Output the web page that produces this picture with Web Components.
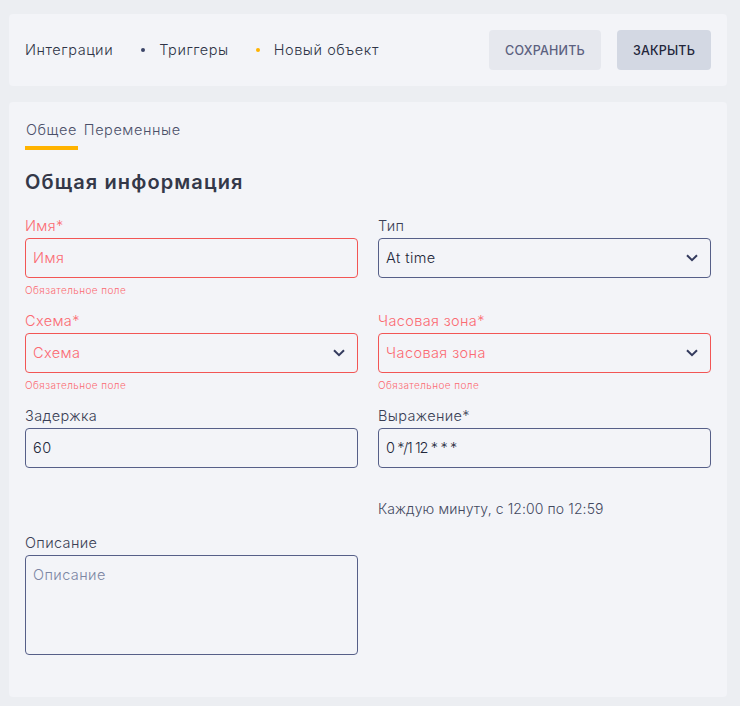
<!DOCTYPE html>
<html lang="ru">
<head>
<meta charset="utf-8">
<title>Новый объект</title>
<style>
    html, body {
        margin: 0;
        height: 706px;
        overflow: hidden;
        background: #eceef2;
        font-family: "Inter", "Noto Sans", sans-serif;
        color: #2f3447;
    }
    body {
        padding: 14px 13px 0 9px;
        box-sizing: border-box;
    }
</style>
</head>
<body>
<x-header>
    <x-crumb>Интеграции</x-crumb>
    <x-crumb dot="#3b4468" gap="28">Триггеры</x-crumb>
    <x-crumb dot="#ffb300" gap="27">Новый объект</x-crumb>
    <x-button slot="actions" kind="save">СОХРАНИТЬ</x-button>
    <x-button slot="actions" kind="close">ЗАКРЫТЬ</x-button>
</x-header>
<x-form-card>
    <x-tab slot="tabs" active>Общее</x-tab>
    <x-tab slot="tabs">Переменные</x-tab>
    <x-field label="Имя*" placeholder="Имя" error="Обязательное поле"></x-field>
    <x-field label="Тип" value="At time" select></x-field>
    <x-field label="Схема*" placeholder="Схема" error="Обязательное поле" select></x-field>
    <x-field label="Часовая зона*" placeholder="Часовая зона" error="Обязательное поле" select></x-field>
    <x-field label="Задержка" value="60"></x-field>
    <x-field label="Выражение*" value="0 */1 12 * * *" hint="Каждую минуту, с 12:00 по 12:59" tight></x-field>
    <x-field label="Описание" placeholder="Описание" multiline></x-field>
</x-form-card>
<script>
"use strict";
class Header extends HTMLElement {
    constructor() {
        super();
        this.attachShadow({ mode: "open" });
        this.shadowRoot.innerHTML = `
            <style>
                :host {
                    display: flex;
                    align-items: center;
                    justify-content: space-between;
                    height: 72px;
                    padding: 0 16px;
                    box-sizing: border-box;
                    background: #f3f4f8;
                    border-radius: 4px;
                }
                #crumbs, #actions { display: flex; align-items: center; }
                #crumbs { padding-bottom: 1px; }
                #actions { gap: 16px; }
            </style>
            <div id="crumbs"><slot></slot></div>
            <div id="actions"><slot name="actions"></slot></div>
        `;
    }
}
class Crumb extends HTMLElement {
    constructor() {
        super();
        this.attachShadow({ mode: "open" });
    }
    connectedCallback() {
        const dot = this.getAttribute("dot");
        this.shadowRoot.innerHTML = `
            <style>
                :host {
                    display: flex;
                    align-items: center;
                    font-size: 14.5px;
                    font-weight: 350;
                    letter-spacing: .55px;
                    color: #2f3447;
                }
                i {
                    width: 4px;
                    height: 4px;
                    border-radius: 50%;
                    margin: 0 14px 0 ${this.getAttribute("gap")}px;
                }
            </style>
            ${dot ? `<i style="background:${dot}"></i>` : ""}<slot></slot>
        `;
    }
}
class Button extends HTMLElement {
    constructor() {
        super();
        this.attachShadow({ mode: "open" });
    }
    connectedCallback() {
        const close = this.getAttribute("kind") === "close";
        this.shadowRoot.innerHTML = `
            <style>
                :host {
                    display: flex;
                    align-items: center;
                    justify-content: center;
                    height: 40px;
                    width: ${close ? 94 : 112}px;
                    border-radius: 4px;
                    font-size: 12.5px;
                    font-weight: 500;
                    letter-spacing: .2px;
                    background: ${close ? "#d3d8e3" : "#e6e8ee"};
                    color: ${close ? "#23263a" : "#5c6180"};
                }
            </style>
            <slot></slot>
        `;
    }
}
class Tab extends HTMLElement {
    constructor() {
        super();
        this.attachShadow({ mode: "open" });
    }
    connectedCallback() {
        const active = this.hasAttribute("active");
        this.shadowRoot.innerHTML = `
            <style>
                :host {
                    display: block;
                    height: 32px;
                    padding: 0 1px;
                    box-sizing: border-box;
                    line-height: 24px;
                    font-size: 14.5px;
                    font-weight: 350;
                    letter-spacing: .56px;
                    color: #4b5069;
                    border-bottom: 4px solid ${active ? "#ffb300" : "transparent"};
                }
            </style>
            <slot></slot>
        `;
    }
}
class FormCard extends HTMLElement {
    constructor() {
        super();
        this.attachShadow({ mode: "open" });
        this.shadowRoot.innerHTML = `
            <style>
                :host {
                    display: block;
                    height: 595px;
                    margin-top: 16px;
                    padding: 16px;
                    box-sizing: border-box;
                    background: #f3f4f8;
                    border-radius: 4px;
                }
                #tabs { display: flex; gap: 5px; }
                h2 {
                    margin: 19px 0 0;
                    height: 49px;
                    font-size: 20px;
                    line-height: 26px;
                    font-weight: 600;
                    letter-spacing: 1.1px;
                    color: #343849;
                }
                #grid {
                    display: grid;
                    grid-template-columns: 1fr 1fr;
                    column-gap: 20px;
                    row-gap: 0;
                }
            </style>
            <div id="tabs"><slot name="tabs"></slot></div>
            <h2>Общая информация</h2>
            <div id="grid"><slot></slot></div>
        `;
    }
}
class Field extends HTMLElement {
    constructor() {
        super();
        this.attachShadow({ mode: "open" });
    }
    connectedCallback() {
        const error = this.getAttribute("error");
        const hint = this.getAttribute("hint");
        const placeholder = this.getAttribute("placeholder");
        const text = this.getAttribute("value") || placeholder;
        const cls = (error ? "invalid " : "") + (placeholder ? "empty " : "") + (this.hasAttribute("multiline") ? "multi " : "") + (this.hasAttribute("tight") ? "tight" : "");
        const chevron = `<svg width="12" height="8" viewBox="0 0 12 8" fill="none"><path d="M1 1.2 6 6.2 11 1.2" stroke="#343b5e" stroke-width="2"/></svg>`;
        this.shadowRoot.innerHTML = `
            <style>
                :host {
                    display: block;
                    height: ${hint ? 127 : 95}px;
                    font-size: 14.5px;
                    font-weight: 350;
                    --line: #565f88;
                    --fg: #23273a;
                    --ph: #7c86a3;
                }
                .invalid { --line: #f25555; --fg: #fb6a72; --ph: #fb6a72; }
                label {
                    display: block;
                    height: 20px;
                    line-height: 15px;
                    letter-spacing: .36px;
                    color: #3a3f55;
                }
                .invalid label { color: var(--fg); }
                #box {
                    display: flex;
                    justify-content: space-between;
                    align-items: center;
                    height: 40px;
                    padding: 0 12px 2px 7px;
                    box-sizing: border-box;
                    border: 1px solid var(--line);
                    border-radius: 4px;
                    letter-spacing: .42px;
                    color: var(--fg);
                }
                .tight #box { letter-spacing: -1.3px; word-spacing: .9px; }
                .empty #box { color: var(--ph); }
                .multi #box { height: 100px; align-items: flex-start; padding-top: 9px; line-height: 20px; }
                svg { margin-top: 2px; }
                small {
                    display: block;
                    margin-top: 6px;
                    font-size: 10px;
                    line-height: 12px;
                    letter-spacing: .42px;
                    color: #fb6a72;
                }
                p {
                    margin: 32px 0 0;
                    line-height: 18px;
                    font-size: 14px;
                    letter-spacing: .1px;
                    word-spacing: 0;
                    color: #43495f;
                }
            </style>
            <div class="${cls}">
                <label>${this.getAttribute("label")}</label>
                <div id="box"><span>${text}</span>${this.hasAttribute("select") ? chevron : ""}</div>
                ${error ? `<small>${error}</small>` : ""}
                ${hint ? `<p>${hint}</p>` : ""}
            </div>
        `;
    }
}
customElements.define("x-header", Header);
customElements.define("x-crumb", Crumb);
customElements.define("x-button", Button);
customElements.define("x-tab", Tab);
customElements.define("x-form-card", FormCard);
customElements.define("x-field", Field);
</script>
</body>
</html>
